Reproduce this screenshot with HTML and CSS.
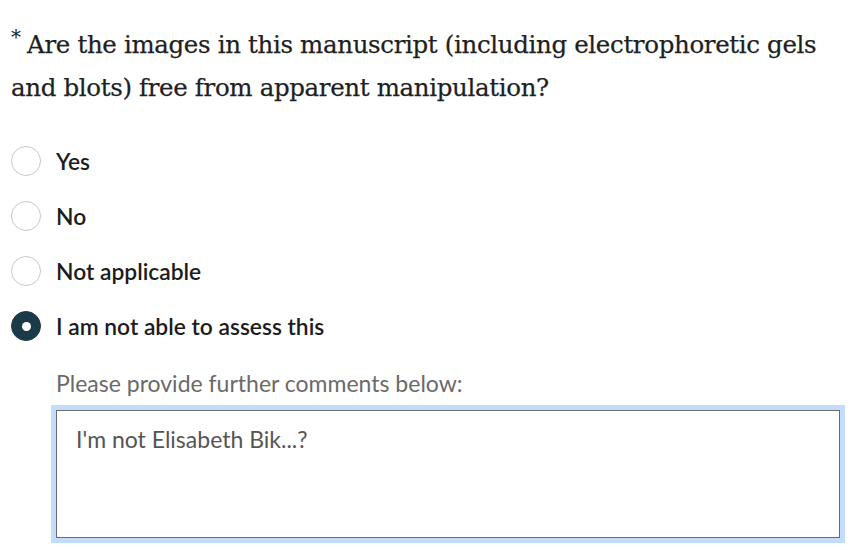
FILE: index.html
```html
<!DOCTYPE html>
<html lang="en">
<head>
<meta charset="utf-8">
<title>Question</title>
<link rel="stylesheet" href="styles.css">
</head>
<body>
<div class="question">
  <div class="q-title"><span class="req">*</span> Are the images in this manuscript (including electrophoretic gels and blots) free from apparent manipulation?</div>
  <div class="options">
    <label class="option"><span class="radio"></span><span class="opt-text">Yes</span></label>
    <label class="option"><span class="radio"></span><span class="opt-text">No</span></label>
    <label class="option"><span class="radio"></span><span class="opt-text">Not applicable</span></label>
    <label class="option"><span class="radio checked"></span><span class="opt-text">I am not able to assess this</span></label>
  </div>
  <div class="comments">
    <div class="comments-label">Please provide further comments below:</div>
    <div class="textarea">I'm not Elisabeth Bik...?</div>
  </div>
</div>
</body>
</html>
```
FILE: styles.css
```css
html, body {
  margin: 0;
  padding: 0;
  background: #fff;
}
body {
  width: 856px;
  height: 550px;
  overflow: hidden;
}
.question {
  padding: 23px 11px 0 11px;
}
.q-title {
  font-family: "DejaVu Serif", serif;
  font-size: 24.5px;
  line-height: 43px;
  color: #1f1f1f;
  letter-spacing: -0.35px;
  -webkit-text-stroke: 0.25px #1f1f1f;
}
.req {
  display: inline-block;
  font-size: 20px;
  line-height: 14px;
  height: 14px;
  vertical-align: 9px;
  margin-right: -1px;
  -webkit-text-stroke: 0;
}
.options {
  display: flex;
  flex-direction: column;
  gap: 25px;
  margin-top: 37px;
}
.option {
  display: flex;
  align-items: center;
  gap: 15px;
  height: 30px;
  font-family: "Lato", sans-serif;
  font-weight: 600;
  font-size: 22.8px;
  color: #1c1c1c;
}
.radio {
  box-sizing: border-box;
  width: 30px;
  height: 30px;
  border: 1px solid #c8c8c8;
  border-radius: 50%;
  flex: none;
  display: flex;
  align-items: center;
  justify-content: center;
  background: #fff;
}
.radio.checked {
  background: #1a3a48;
  border-color: #1a3a48;
}
.radio.checked::after {
  content: "";
  width: 9px;
  height: 9px;
  border-radius: 50%;
  background: #fff;
}
.comments {
  margin-left: 45px;
  margin-top: 28px;
}
.comments-label {
  font-family: "Lato", sans-serif;
  font-size: 23px;
  color: #6a6a6a;
  line-height: 28px;
}
.textarea {
  box-sizing: border-box;
  margin-top: 13px;
  margin-right: 5px;
  height: 128px;
  border: 1px solid #6b6b6b;
  box-shadow: 0 0 0 5px #c1ddfb;
  padding: 14px 19px;
  font-family: "Lato", sans-serif;
  font-size: 23px;
  line-height: 28px;
  color: #555;
}
```
